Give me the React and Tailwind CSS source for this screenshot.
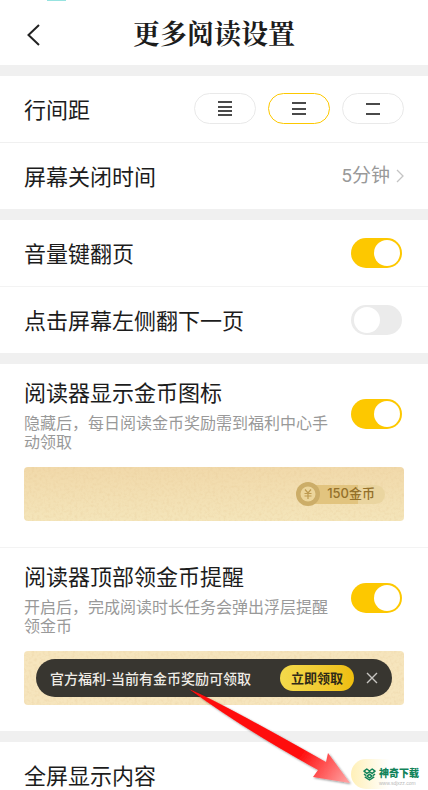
import React, { useState } from 'react';

const SPACINGS = [
    { id: 'compact', label: '紧凑', lines: [2, 7, 11, 15] },
    { id: 'normal', label: '适中', lines: [3, 9, 14] },
    { id: 'loose', label: '宽松', lines: [4, 14] },
];

function Switch({ id, checked, onChange }) {
    return (
        <span className="relative mr-[2px] flex h-[30px] w-[51px] shrink-0">
            <input
                type="checkbox"
                id={id}
                checked={checked}
                onChange={(e) => onChange(e.target.checked)}
                className="peer h-full w-full cursor-pointer appearance-none rounded-full bg-[#ebebeb] checked:bg-[#fdc800]"
            />
            <span className="pointer-events-none absolute left-[3px] top-[2px] h-[26px] w-[26px] rounded-full bg-white peer-checked:left-[23px]" />
        </span>
    );
}

function SwitchRow({ id, title, defaultOn }) {
    const [on, setOn] = useState(defaultOn);
    return (
        <div className="box-content flex h-[66px] items-center justify-between">
            <label htmlFor={id} className="pb-[2px] pl-6 text-[22px]">{title}</label>
            <div className="pr-6">
                <Switch id={id} checked={on} onChange={setOn} />
            </div>
        </div>
    );
}

function PreviewItem({ id, title, desc, children }) {
    const [on, setOn] = useState(true);
    return (
        <div className="px-6 pb-[26px] pt-3">
            <div className="flex items-center justify-between gap-4">
                <div>
                    <label htmlFor={id} className="block text-[22px] leading-[30px]">{title}</label>
                    <p className="mt-[7px] text-base leading-[19px] text-[#999]">{desc}</p>
                </div>
                <Switch id={id} checked={on} onChange={setOn} />
            </div>
            {children}
        </div>
    );
}

// Speckled old-paper grain laid over the banner colour
function Paper({ id }) {
    return (
        <svg className="absolute inset-0 h-full w-full" aria-hidden="true">
            <filter id={id} x="0" y="0" width="100%" height="100%">
                <feTurbulence type="fractalNoise" baseFrequency="0.37" numOctaves="2" seed="4" />
                <feColorMatrix values="0 0 0 0 0.75  0 0 0 0 0.52  0 0 0 0 0.25  0.5 0 0 0 -0.21" />
            </filter>
            <rect width="100%" height="100%" filter={`url(#${id})`} />
        </svg>
    );
}

function App() {
    const [spacing, setSpacing] = useState('normal');

    return (
        <div className="relative flex h-screen flex-col gap-[11px] overflow-hidden bg-[#f0f0f0] font-['Noto_Sans_CJK_SC',sans-serif] text-[#1c1c1c]">
            <header className="grid h-[65px] shrink-0 grid-cols-[60px_1fr_60px] items-center bg-white">
                <button type="button" aria-label="返回" className="ml-6 mt-1">
                    <svg width="18" height="24" viewBox="0 0 18 24" fill="none" stroke="#222" strokeWidth="2">
                        <path d="M15 2 4.5 12 15 22" />
                    </svg>
                </button>
                <h1 className="text-center font-['Noto_Serif_CJK_SC','Noto_Sans_CJK_SC',serif] text-[27px] font-bold leading-[40px]">更多阅读设置</h1>
            </header>

            <section className="shrink-0 divide-y divide-[#f0f0f0] bg-white">
                <fieldset className="box-content flex h-[66px] items-center justify-between">
                    <legend className="float-left pb-[2px] pl-6 text-[22px]">行间距</legend>
                    <div className="flex gap-3 pb-[2px] pr-6">
                        {SPACINGS.map((s) => (
                            <label
                                key={s.id}
                                className="relative flex h-[31px] w-[62px] cursor-pointer items-center justify-center rounded-full border border-[#e9e9e9] has-checked:border-[#fdc800]"
                            >
                                <input
                                    type="radio"
                                    name="spacing"
                                    aria-label={s.label}
                                    checked={spacing === s.id}
                                    onChange={() => setSpacing(s.id)}
                                    className="absolute inset-0 cursor-pointer appearance-none rounded-full"
                                />
                                <svg width="14" height="17" viewBox="0 0 14 17" stroke="#4a4a4a" strokeWidth="2">
                                    {s.lines.map((y) => <path key={y} d={`M0 ${y}H14`} />)}
                                </svg>
                            </label>
                        ))}
                    </div>
                </fieldset>
                <div className="flex h-[66px] items-center justify-between px-6">
                    <span className="pb-[2px] text-[22px]">屏幕关闭时间</span>
                    <button type="button" className="flex items-center gap-[6px] font-['Roboto','Noto_Sans_CJK_SC',sans-serif] text-[19px] text-[#999]">
                        5分钟
                        <svg width="8" height="14" viewBox="0 0 8 14" fill="none" stroke="#c4c4c4" strokeWidth="1.3">
                            <path d="M1 1 7 7 1 13" />
                        </svg>
                    </button>
                </div>
            </section>

            <section className="shrink-0 divide-y divide-[#f3f3f3] bg-white">
                <SwitchRow id="volume" title="音量键翻页" defaultOn={true} />
                <SwitchRow id="left-tap" title="点击屏幕左侧翻下一页" defaultOn={false} />
            </section>

            <section className="shrink-0 divide-y divide-[#f3f3f3] bg-white">
                <PreviewItem id="coin" title="阅读器显示金币图标" desc="隐藏后，每日阅读金币奖励需到福利中心手动领取">
                    <div className="relative mt-4 flex h-[54px] items-center justify-end overflow-hidden rounded bg-linear-to-b from-[#f1d9aa] to-[#f4e5ba] pr-[19px]">
                        <Paper id="paper-coin" />
                        <div className="relative flex items-center">
                            <svg className="relative z-10 -mr-3" width="24" height="24" viewBox="0 0 24 24" fill="none">
                                <circle cx="12" cy="12" r="12" fill="#ccad68" />
                                <circle cx="12" cy="12" r="7.5" fill="#ecd59b" />
                                <path d="M9 7.5 12 11l3-3.5M8.5 11.5h7M8.5 14h7M12 11v6" stroke="#bd9a50" strokeWidth="1.2" />
                            </svg>
                            <div className="flex h-[19px] items-center rounded-r-full bg-linear-to-r from-[#e2c47f] from-65% to-[#ead5a0] to-65% pl-[19px] pr-[10px] font-['Inter','Noto_Sans_CJK_SC',sans-serif] text-[13px] font-medium text-[#94702a]">
                                150金币
                            </div>
                        </div>
                    </div>
                </PreviewItem>
                <PreviewItem id="top-tip" title="阅读器顶部领金币提醒" desc="开启后，完成阅读时长任务会弹出浮层提醒领金币">
                    <div className="relative mt-4 flex h-[54px] items-center overflow-hidden rounded bg-[#f6e5bd] px-3">
                        <Paper id="paper-tip" />
                        <div className="relative flex h-[38px] flex-1 items-center rounded-full bg-[#383630] px-[14px]">
                            <span className="flex-1 text-sm font-medium text-[#efece6]">官方福利-当前有金币奖励可领取</span>
                            <button type="button" className="h-[26px] w-[74px] rounded-full bg-linear-to-r from-[#f3da4b] to-[#efbe0c] text-[13px] font-bold text-[#2f2a18]">
                                立即领取
                            </button>
                            <button type="button" aria-label="关闭" className="ml-3">
                                <svg width="12" height="12" viewBox="0 0 12 12" stroke="#c8c6c2" strokeWidth="1.4">
                                    <path d="M1 1 11 11M11 1 1 11" />
                                </svg>
                            </button>
                        </div>
                    </div>
                </PreviewItem>
            </section>

            <section className="shrink-0 bg-white">
                <div className="flex h-[66px] items-center px-6">
                    <span className="pb-[2px] text-[22px]">全屏显示内容</span>
                </div>
            </section>

            <span className="absolute left-[47px] top-0 h-px w-[19px] bg-[#97e3e0]" />

            {/* Pointer and site mark over the last switch */}
            <svg className="pointer-events-none absolute left-[185px] top-[685px]" width="170" height="105" viewBox="0 0 170 105" aria-hidden="true">
                <defs>
                    <linearGradient id="arrow" gradientUnits="userSpaceOnUse" x1="115" y1="68" x2="160" y2="98">
                        <stop offset="0" stopColor="#ff0a0a" />
                        <stop offset="1" stopColor="#ff9c9c" />
                    </linearGradient>
                    <filter id="shadow" x="-10%" y="-10%" width="120%" height="130%">
                        <feDropShadow dx="1" dy="1" stdDeviation="1" floodOpacity="0.45" />
                    </filter>
                </defs>
                <path d="M4 4Q35 17 141 77L143 68 165 98 128 92 133 85Q60 45 4 4Z" fill="url(#arrow)" filter="url(#shadow)" />
            </svg>
            <div className="absolute left-[351px] top-[759px] flex h-[30px] w-[77px] items-center rounded-l-full bg-linear-to-r from-[#fff0b8] to-white to-50% pl-3">
                <svg width="13" height="13" viewBox="0 0 13 13" fill="none" stroke="#12835a" strokeWidth="1.5" strokeLinejoin="round">
                    <path d="M1 3.2 3.8 1 6.5 3 9.2 1 12 3.2 9.2 5.4 6.5 3.8 3.8 5.4Z" />
                    <path d="M1 6 3 7.6M12 6 10 7.6M6.5 6.2 9 8.2 6.5 10 4 8.2Z" />
                    <path d="M1.8 8.8 6.5 12 11.2 8.8" />
                </svg>
                <div className="ml-[3px] mt-1 flex flex-col">
                    <span className="text-[10px] font-black leading-[14px] text-[#12835a]">神奇下载</span>
                    <span className="font-['Liberation_Sans',sans-serif] text-[5px] leading-[6px] text-[#b9b9b9]">www.sdjxzz.com</span>
                </div>
            </div>
        </div>
    );
}

export default App;
